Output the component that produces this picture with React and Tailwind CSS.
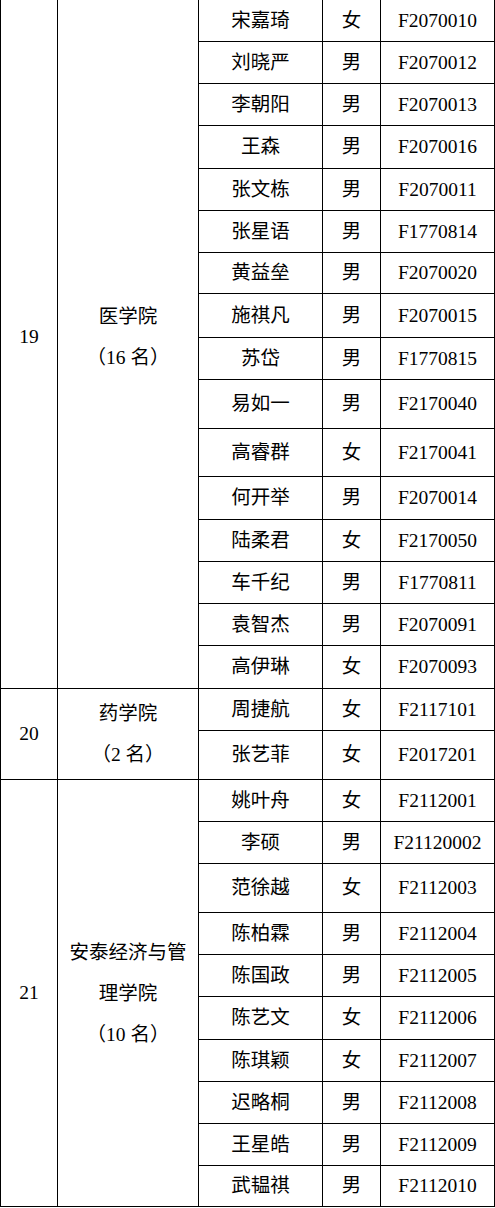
import React from 'react';

// 每组：序号、学院（分行）、名单 [姓名, 性别, 学号, 行高]
const groups = [
  {
    no: '19',
    college: ['医学院', '（16 名）'],
    shift: 'pb-[14px]',
    rows: [
      ['宋嘉琦', '女', 'F2070010', 42],
      ['刘晓严', '男', 'F2070012', 42],
      ['李朝阳', '男', 'F2070013', 42],
      ['王森', '男', 'F2070016', 43],
      ['张文栋', '男', 'F2070011', 42],
      ['张星语', '男', 'F1770814', 42],
      ['黄益垒', '男', 'F2070020', 41],
      ['施祺凡', '男', 'F2070015', 44],
      ['苏岱', '男', 'F1770815', 42],
      ['易如一', '男', 'F2170040', 49],
      ['高睿群', '女', 'F2170041', 48],
      ['何开举', '男', 'F2070014', 43],
      ['陆柔君', '女', 'F2170050', 42],
      ['车千纪', '男', 'F1770811', 42],
      ['袁智杰', '男', 'F2070091', 42],
      ['高伊琳', '女', 'F2070093', 43],
    ],
  },
  {
    no: '20',
    college: ['药学院', '（2 名）'],
    shift: '',
    rows: [
      ['周捷航', '女', 'F2117101', 42],
      ['张艺菲', '女', 'F2017201', 49],
    ],
  },
  {
    no: '21',
    college: ['安泰经济与管', '理学院', '（10 名）'],
    shift: '',
    rows: [
      ['姚叶舟', '女', 'F2112001', 42],
      ['李硕', '男', 'F21120002', 42],
      ['范徐越', '女', 'F2112003', 49],
      ['陈柏霖', '男', 'F2112004', 42],
      ['陈国政', '男', 'F2112005', 42],
      ['陈艺文', '女', 'F2112006', 43],
      ['陈琪颖', '女', 'F2112007', 42],
      ['迟略桐', '男', 'F2112008', 42],
      ['王星皓', '男', 'F2112009', 42],
      ['武韫祺', '男', 'F2112010', 41],
    ],
  },
];

export default function App() {
  return (
    <div className="w-[495px] h-[1208px] bg-white text-black text-[19.5px] font-['Liberation_Serif','Noto_Sans_CJK_SC',serif]">
      <div className="border-l border-black">
        {groups.map((g) => (
          <div key={g.no} className="flex">
            <div className={`w-[57px] shrink-0 border-r border-b border-black flex items-center justify-center ${g.shift}`}>
              {g.no}
            </div>
            <div className={`w-[141px] shrink-0 border-r border-b border-black flex flex-col items-center justify-center leading-[41px] ${g.shift}`}>
              {g.college.map((line) => (
                <div key={line} className="whitespace-pre">{line}</div>
              ))}
            </div>
            <div className="flex flex-col">
              {g.rows.map(([name, sex, id, h]) => (
                <div key={id} className="flex border-b border-black" style={{ height: h }}>
                  <div className="w-[124px] shrink-0 border-r border-black flex items-center justify-center">{name}</div>
                  <div className="w-[58px] shrink-0 border-r border-black flex items-center justify-center">{sex}</div>
                  <div className="w-[114px] shrink-0 border-r border-black flex items-center justify-center">{id}</div>
                </div>
              ))}
            </div>
          </div>
        ))}
      </div>
    </div>
  );
}
